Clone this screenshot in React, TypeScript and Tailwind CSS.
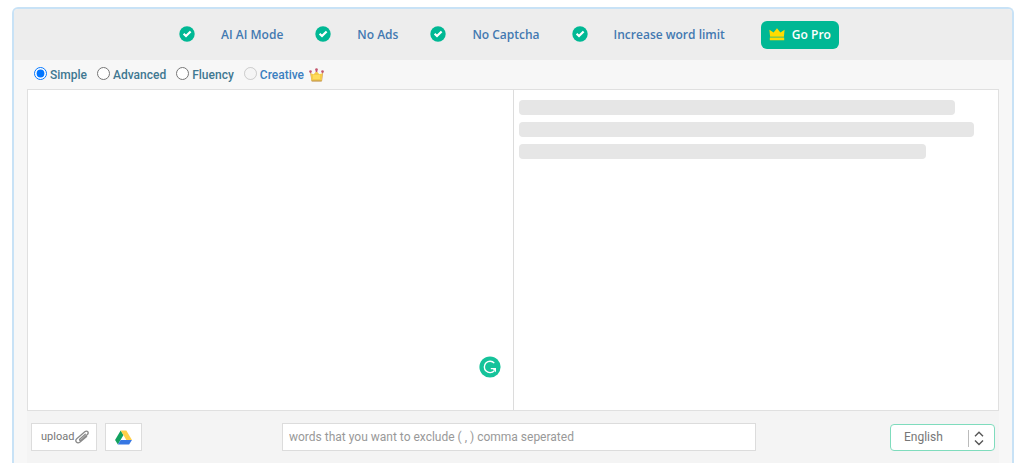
import { useState } from "react";

const modes = [
  { id: "simple", label: "Simple" },
  { id: "advanced", label: "Advanced" },
  { id: "fluency", label: "Fluency" },
];

const perks = ["AI AI Mode", "No Ads", "No Captcha", "Increase word limit"];

function CheckBadge() {
  return (
    <svg viewBox="0 0 16 16" className="mb-px size-4 shrink-0" aria-hidden="true">
      <circle cx="8" cy="8" r="7.7" fill="#00b894" />
      <path d="M4.600 7.800 7 10l4.600-4.500" fill="none" stroke="#fff" strokeWidth="2.200" />
    </svg>
  );
}

function ProCrown() {
  return (
    <svg viewBox="0 0 16 13" className="mb-px h-[13px] w-4 shrink-0" aria-hidden="true">
      <path d="M.4 1.800 4.600 4.600 8 .2l3.400 4.400 4.200-2.800-.7 7H1.100z" fill="#ffdc00" />
      <path d="M.8 9.700h14.400v2.500H.8z" fill="#ffdc00" />
      <path d="M1 8.700h14v1H1z" fill="#a5cd30" />
    </svg>
  );
}

function GoldCrown() {
  return (
    <svg viewBox="0 0 15 14" className="mb-px ml-[2px] h-[14px] w-[15px] shrink-0" aria-hidden="true">
      <path d="M1.400 3.600 3 12.900h9.600l1.200-9.300" fill="none" stroke="#c98a4c" strokeWidth=".8" />
      <path d="M1.600 5.200 4.700 6.300 7.500 3l2.800 3.300 3.300-1.100-1 7.700H2.600z" fill="#f5cb4a" />
      <path d="M4 7h7v4H4z" fill="#ffdc5a" />
      <path d="M2.500 12.900h10.200" stroke="#c39a4d" strokeWidth="1" />
      <path d="M7.500 1.500v2.500" stroke="#c2556d" strokeWidth="1.600" />
      <circle cx="1.500" cy="3.600" r="1.300" fill="#c2556d" />
      <circle cx="7.500" cy="1.500" r="1.300" fill="#c2556d" />
      <circle cx="13.500" cy="3.600" r="1.300" fill="#c2556d" />
    </svg>
  );
}

function PaperClip() {
  return (
    <svg viewBox="0 0 14 14" className="size-[14px] shrink-0" fill="none" stroke="#8a8a8a" strokeWidth="1.300" strokeLinecap="round" strokeLinejoin="round" aria-hidden="true">
      <path d="M10.300 4.200 5 8.900c-1 .9.100 2.200 1.100 1.300l6-5.400C14.500 2.600 12.200-.2 9.800 1.800L2 8.400c-2.800 2.500.2 6 3.100 3.600l6.500-5.500" />
    </svg>
  );
}

function DriveLogo() {
  return (
    <svg viewBox="0 0 18 16" className="h-[15px] w-[17px]" aria-hidden="true">
      <path d="M6 .5 0 10.700 3 15.500 9 5.400z" fill="#11a15f" />
      <path d="M6 .5h6l6 10.200h-6z" fill="#ffcf48" />
      <path d="M6 10.700h12l-3 4.800H3z" fill="#3777e3" />
    </svg>
  );
}

function GrammarBadge() {
  return (
    <svg viewBox="0 0 22 22" className="size-[22px]" aria-hidden="true">
      <circle cx="11" cy="11" r="10.600" fill="#15c39a" />
      <path d="M15.300 7.100A5.700 5.700 0 1 0 15.300 14.700M11.800 12.600h4.200" fill="none" stroke="#fff" strokeWidth="1.400" />
      <path d="M12.800 12h4.200v4.200z" fill="#fff" />
    </svg>
  );
}

export default function App() {
  const [mode, setMode] = useState("simple");
  const [text, setText] = useState("");

  return (
    <main className="bg-white pr-[10px] pl-3 pt-[7px] font-['Roboto',sans-serif]">
      <section className="overflow-hidden rounded-t-md border-2 border-b-0 border-[#c8e2f6] bg-[#f7f7f7]">
        <header className="flex h-[51px] items-center justify-center bg-[#ededed] pr-2 font-['Open_Sans',sans-serif] text-[12px] font-semibold text-[#4379b1]">
          <ul className="mr-9 flex items-center gap-8">
            {perks.map((perk) => (
              <li key={perk} className="flex items-center gap-[26px] whitespace-nowrap">
                <CheckBadge />
                {perk}
              </li>
            ))}
          </ul>
          <button type="button" className="flex h-7 items-center gap-[7px] rounded-md bg-[#00b894] px-2 whitespace-nowrap text-white">
            <ProCrown />
            Go Pro
          </button>
        </header>

        <div className="px-[13px]">
          <fieldset className="flex h-[29px] items-center gap-[10px] pl-[7px] pt-px text-[12px] font-medium text-[#3f7891]">
            {modes.map((m) => (
              <label key={m.id} className="flex items-center gap-[3px]">
                <input
                  type="radio"
                  name="mode"
                  value={m.id}
                  checked={mode === m.id}
                  onChange={() => setMode(m.id)}
                  className="mb-1 size-[13px]"
                />
                {m.label}
              </label>
            ))}
            <label className="flex items-center gap-[3px] text-[#3b7fc0]">
              <input type="radio" name="mode" value="creative" disabled className="mb-1 size-[13px]" />
              Creative
              <GoldCrown />
            </label>
          </fieldset>

          <div className="grid h-[322px] grid-cols-2 border border-[#e0e0e0] bg-white">
            <div className="relative">
              <textarea
                aria-label="Text to rewrite"
                value={text}
                onChange={(e) => setText(e.target.value)}
                className="block size-full resize-none p-2 text-sm outline-none"
              />
              <span className="absolute right-3 bottom-8">
                <GrammarBadge />
              </span>
            </div>
            <div className="flex flex-col gap-[7px] border-l border-[#dcdcdc] py-[10px] pl-[5px]">
              <div className="h-[15px] w-[91%] rounded-sm bg-[#e6e6e6]" />
              <div className="h-[15px] w-[95%] rounded-sm bg-[#e6e6e6]" />
              <div className="h-[15px] w-[85%] rounded-sm bg-[#e6e6e6]" />
            </div>
          </div>

          <footer className="grid h-[52px] grid-cols-[239fr_minmax(0,474px)_227fr] items-center gap-3 bg-[#f4f4f4] px-1">
            <div className="flex gap-2">
              <button type="button" className="flex h-7 items-center gap-px border border-[#dcdcdc] bg-white pr-[7px] pl-[9px] text-[11px] text-[#777]">
                upload
                <PaperClip />
              </button>
              <button type="button" aria-label="Google Drive" className="flex h-7 w-[37px] items-center justify-center border border-[#dcdcdc] bg-white">
                <DriveLogo />
              </button>
            </div>
            <input
              type="text"
              aria-label="Words to exclude"
              placeholder="words that you want to exclude ( , ) comma seperated"
              className="h-7 w-full border border-[#dcdcdc] bg-white px-[6px] text-[12px] text-[#555] outline-none placeholder:text-[#999]"
            />
            <div className="relative w-[105px] justify-self-end">
              <select aria-label="Language" className="block h-[27px] w-full appearance-none rounded border border-[#7fdcbd] bg-white pl-[13px] text-[12px] text-[#777] outline-none">
                <option>English</option>
                <option>Spanish</option>
                <option>French</option>
              </select>
              <svg viewBox="0 0 18 17" className="pointer-events-none absolute top-[6px] right-[10px] h-[17px] w-[18px]" fill="none" aria-hidden="true">
                <path d="M1.500 0v17" stroke="#bbb" />
                <path d="m8 6.300 4-4 4 4M8 10.500l4 4 4-4" stroke="#555" strokeWidth="1.400" />
              </svg>
            </div>
          </footer>
        </div>
      </section>
    </main>
  );
}
